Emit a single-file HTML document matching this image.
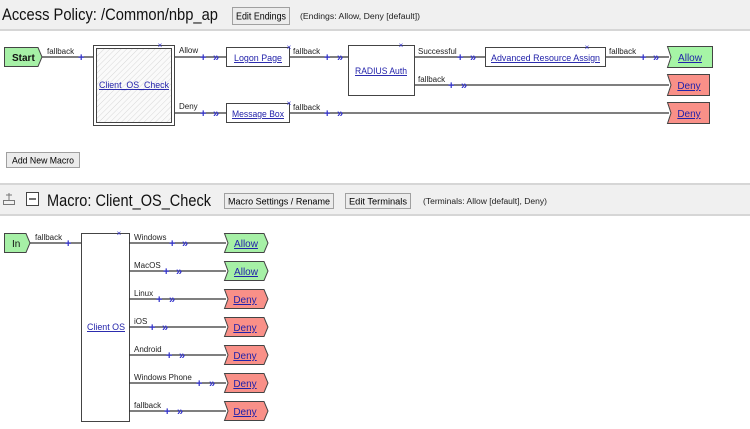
<!DOCTYPE html>
<html><head><meta charset="utf-8"><style>
html,body{margin:0;padding:0;background:#fff;width:750px;height:429px;overflow:hidden;font-family:"Liberation Sans","DejaVu Sans",sans-serif}
svg{position:absolute;left:0;top:0}
</style></head><body>
<svg width="750" height="429" xmlns="http://www.w3.org/2000/svg" font-family="Liberation Sans, DejaVu Sans, sans-serif">
<defs>
<pattern id="h" width="4" height="4" patternUnits="userSpaceOnUse" patternTransform="rotate(45)"><rect width="4" height="4" fill="#fafafa"/><line x1="0" y1="0" x2="0" y2="4" stroke="#d8d8d8" stroke-width="1"/></pattern>
</defs>
<rect x="0" y="0" width="750" height="29" fill="#f0f0f0"/>
<rect x="0" y="29" width="750" height="2" fill="#d6d6d6"/>
<text x="2" y="20" font-size="17" fill="#111" textLength="216" lengthAdjust="spacingAndGlyphs">Access Policy: /Common/nbp_ap</text>
<rect x="232.5" y="7.5" width="57" height="17" fill="#ececec" stroke="#a0a0a0"/>
<text x="236" y="19.5" font-size="10" fill="#000" textLength="50" lengthAdjust="spacingAndGlyphs">Edit Endings</text>
<text x="300" y="19" font-size="8" fill="#222" textLength="120" lengthAdjust="spacingAndGlyphs">(Endings: Allow, Deny [default])</text>

<g stroke="#333" stroke-width="1.3" fill="none">
<line x1="42" y1="57" x2="93" y2="57"/>
<line x1="175" y1="57" x2="226" y2="57"/>
<line x1="289" y1="57" x2="348" y2="57"/>
<line x1="414" y1="57" x2="485" y2="57"/>
<line x1="605" y1="57" x2="669" y2="57"/>
<line x1="414" y1="85" x2="669" y2="85"/>
<line x1="175" y1="113" x2="226" y2="113"/>
<line x1="289" y1="113" x2="669" y2="113"/>
</g>
<g font-size="8" fill="#222">
<text x="47" y="54">fallback</text>
<text x="179" y="53">Allow</text>
<text x="179" y="109">Deny</text>
<text x="293" y="54">fallback</text>
<text x="293" y="110">fallback</text>
<text x="418" y="54">Successful</text>
<text x="418" y="82">fallback</text>
<text x="609" y="54">fallback</text>
</g>
<g font-size="11" fill="#33c" font-weight="bold">
<text x="78" y="61">+</text>
<text x="200" y="61">+</text><text x="213" y="61">»</text>
<text x="324" y="61">+</text><text x="337" y="61">»</text>
<text x="457" y="61">+</text><text x="470" y="61">»</text>
<text x="640" y="61">+</text><text x="653" y="61">»</text>
<text x="448" y="89">+</text><text x="461" y="89">»</text>
<text x="200" y="117">+</text><text x="213" y="117">»</text>
<text x="324" y="117">+</text><text x="337" y="117">»</text>
</g>
<polygon points="4.5,47.5 38,47.5 42,57 38,66.5 4.5,66.5" fill="#a6f0a6" stroke="#444"/>
<text x="12" y="61" font-size="10" font-weight="bold" fill="#111">Start</text>
<rect x="93.5" y="45.5" width="81" height="80" fill="#fff" stroke="#444"/>
<rect x="96.5" y="48.5" width="75" height="74" fill="url(#h)" stroke="#444"/>
<g font-size="9.5" fill="#22a" text-decoration="underline">
<text x="99" y="88" textLength="70" lengthAdjust="spacingAndGlyphs">Client_OS_Check</text>
<text x="234" y="61" textLength="48" lengthAdjust="spacingAndGlyphs">Logon Page</text>
<text x="232" y="117" textLength="52" lengthAdjust="spacingAndGlyphs">Message Box</text>
<text x="355" y="74" textLength="52" lengthAdjust="spacingAndGlyphs">RADIUS Auth</text>
<text x="491" y="61" textLength="109" lengthAdjust="spacingAndGlyphs">Advanced Resource Assign</text>
</g>
<rect x="226.5" y="47.5" width="63" height="19" fill="none" stroke="#444"/>
<rect x="226.5" y="103.5" width="63" height="19" fill="none" stroke="#444"/>
<rect x="348.5" y="45.5" width="66" height="50" fill="none" stroke="#444"/>
<rect x="485.5" y="47.5" width="120" height="19" fill="none" stroke="#444"/>
<g font-size="8" fill="#33c" text-anchor="middle"><text x="160" y="48">×</text><text x="289" y="50">×</text><text x="289" y="106">×</text><text x="401" y="48">×</text><text x="587" y="50">×</text></g>
<polygon points="667.5,46.5 712.5,46.5 712.5,67.5 667.5,67.5 671,57" fill="#a6f5a6" stroke="#444"/>
<text x="690" y="61" font-size="10" fill="#22a" text-anchor="middle" text-decoration="underline">Allow</text>
<polygon points="667.5,74.5 709.5,74.5 709.5,95.5 667.5,95.5 671,85" fill="#f99088" stroke="#444"/>
<text x="689" y="89" font-size="10" fill="#22a" text-anchor="middle" text-decoration="underline">Deny</text>
<polygon points="667.5,102.5 709.5,102.5 709.5,123.5 667.5,123.5 671,113" fill="#f99088" stroke="#444"/>
<text x="689" y="117" font-size="10" fill="#22a" text-anchor="middle" text-decoration="underline">Deny</text>

<rect x="6.5" y="152.5" width="73" height="15" fill="#ececec" stroke="#a0a0a0"/>
<text x="12" y="163.5" font-size="9" fill="#000" textLength="62" lengthAdjust="spacingAndGlyphs">Add New Macro</text>

<rect x="0" y="183" width="750" height="2" fill="#d6d6d6"/>
<rect x="0" y="185" width="750" height="29" fill="#f0f0f0"/>
<rect x="0" y="214" width="750" height="2" fill="#d6d6d6"/>
<g stroke="#777" fill="none"><rect x="3.5" y="200.5" width="11" height="4"/><line x1="9" y1="193" x2="9" y2="200"/><line x1="6" y1="195" x2="12" y2="195"/></g>
<rect x="26.5" y="192.5" width="12" height="13" fill="#fff" stroke="#444"/>
<line x1="29" y1="199" x2="36" y2="199" stroke="#222" stroke-width="1.3"/>
<text x="47" y="206" font-size="17" fill="#111" textLength="164" lengthAdjust="spacingAndGlyphs">Macro: Client_OS_Check</text>
<rect x="224.5" y="193.5" width="109" height="15" fill="#ececec" stroke="#a0a0a0"/>
<text x="228" y="204.5" font-size="9" fill="#000" textLength="102" lengthAdjust="spacingAndGlyphs">Macro Settings / Rename</text>
<rect x="345.5" y="193.5" width="65" height="15" fill="#ececec" stroke="#a0a0a0"/>
<text x="349" y="204.5" font-size="9" fill="#000" textLength="58" lengthAdjust="spacingAndGlyphs">Edit Terminals</text>
<text x="423" y="204" font-size="8" fill="#222" textLength="124" lengthAdjust="spacingAndGlyphs">(Terminals: Allow [default], Deny)</text>

<polygon points="4.5,233.5 26,233.5 30,243 26,252.5 4.5,252.5" fill="#a6f0a6" stroke="#444"/>
<text x="12" y="247" font-size="10" fill="#111">In</text>
<line x1="30" y1="243" x2="81" y2="243" stroke="#333" stroke-width="1.3"/>
<text x="35" y="240" font-size="8" fill="#222">fallback</text>
<text x="65" y="247" font-size="11" fill="#33c" font-weight="bold">+</text>
<rect x="81.5" y="233.5" width="48" height="188" fill="#fff" stroke="#444"/>
<text x="87" y="330" font-size="9.5" fill="#22a" text-decoration="underline" textLength="38" lengthAdjust="spacingAndGlyphs">Client OS</text>
<text x="119" y="236" font-size="8" fill="#33c" text-anchor="middle">×</text>
<g stroke="#333" stroke-width="1.3">
<line x1="129" y1="243" x2="226" y2="243"/><line x1="129" y1="271" x2="226" y2="271"/><line x1="129" y1="299" x2="226" y2="299"/><line x1="129" y1="327" x2="226" y2="327"/><line x1="129" y1="355" x2="226" y2="355"/><line x1="129" y1="383" x2="226" y2="383"/><line x1="129" y1="411" x2="226" y2="411"/>
</g>
<g font-size="8" fill="#222">
<text x="134" y="240">Windows</text><text x="134" y="268">MacOS</text><text x="134" y="296">Linux</text><text x="134" y="324">iOS</text><text x="134" y="352">Android</text><text x="134" y="380">Windows Phone</text><text x="134" y="408">fallback</text>
</g>
<g font-size="11" fill="#33c" font-weight="bold">
<text x="169" y="247">+</text><text x="182" y="247">»</text>
<text x="163" y="275">+</text><text x="176" y="275">»</text>
<text x="156" y="303">+</text><text x="169" y="303">»</text>
<text x="149" y="331">+</text><text x="162" y="331">»</text>
<text x="166" y="359">+</text><text x="179" y="359">»</text>
<text x="196" y="387">+</text><text x="209" y="387">»</text>
<text x="164" y="415">+</text><text x="177" y="415">»</text>
</g>
<g stroke="#444">
<polygon points="224.5,233.5 264,233.5 268,243 264,252.5 224.5,252.5 228,243" fill="#a6f0a6"/>
<polygon points="224.5,261.5 264,261.5 268,271 264,280.5 224.5,280.5 228,271" fill="#a6f0a6"/>
<polygon points="224.5,289.5 264,289.5 268,299 264,308.5 224.5,308.5 228,299" fill="#f99088"/>
<polygon points="224.5,317.5 264,317.5 268,327 264,336.5 224.5,336.5 228,327" fill="#f99088"/>
<polygon points="224.5,345.5 264,345.5 268,355 264,364.5 224.5,364.5 228,355" fill="#f99088"/>
<polygon points="224.5,373.5 264,373.5 268,383 264,392.5 224.5,392.5 228,383" fill="#f99088"/>
<polygon points="224.5,401.5 264,401.5 268,411 264,420.5 224.5,420.5 228,411" fill="#f99088"/>
</g>
<g font-size="10" fill="#22a" text-anchor="middle" text-decoration="underline">
<text x="246" y="247">Allow</text><text x="246" y="275">Allow</text><text x="245" y="303">Deny</text><text x="245" y="331">Deny</text><text x="245" y="359">Deny</text><text x="245" y="387">Deny</text><text x="245" y="415">Deny</text>
</g>
</svg>
</body></html>
